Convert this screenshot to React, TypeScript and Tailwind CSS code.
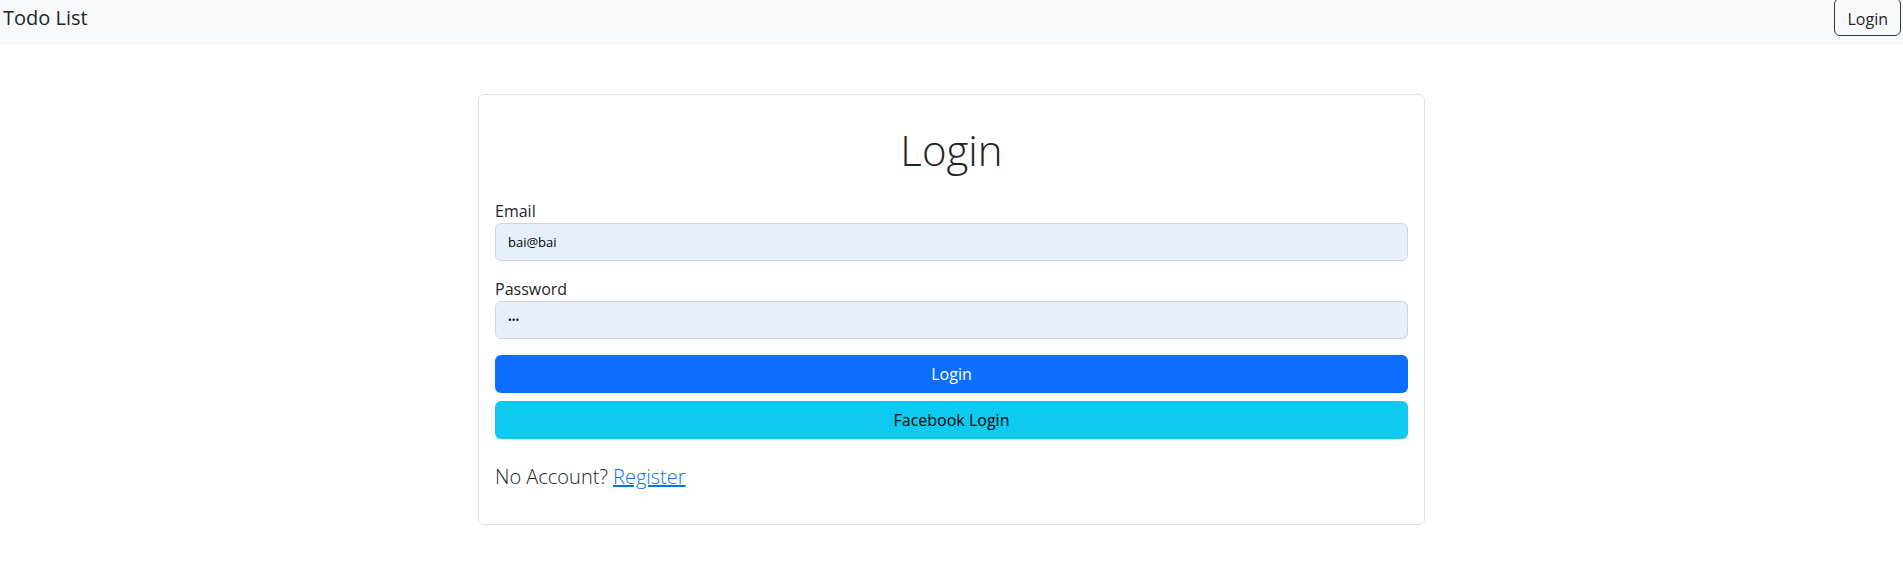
import { useState } from "react";

export default function App() {
  const [email, setEmail] = useState("bai@bai");
  const [password, setPassword] = useState("123");

  return (
    <div className="min-h-screen bg-white font-['Open_Sans',sans-serif] text-[#212529]">
      <nav className="flex h-[45px] items-start justify-between bg-[#f8f9fa]">
        <a href="#" className="pl-[3px] pt-[3px] text-[20px] leading-[30px] text-[#212529]">
          Todo List
        </a>
        <button className="-mt-[2px] mr-[2px] flex h-[38px] items-center rounded-[6px] border border-[#343a40] px-3 pt-[3px] text-[16px] leading-6 text-[#212529]">
          Login
        </button>
      </nav>

      <div className="mx-auto mt-[49px] w-[947px] rounded-[6px] border border-[#dee2e6] bg-white p-4">
        <h1 className="mt-[15px] mb-[25px] text-center text-[42px] leading-[48px] font-light">
          Login
        </h1>

        <form onSubmit={(e) => e.preventDefault()}>
          <div className="mb-4">
            <label className="block text-[16px] leading-6">Email</label>
            <input
              type="email"
              value={email}
              onChange={(e) => setEmail(e.target.value)}
              className="block h-[38px] w-full rounded-[6px] border border-[#ced4da] bg-[#e8f0fe] px-3 text-[13px] text-black outline-none"
            />
          </div>
          <div className="mb-4">
            <label className="block text-[16px] leading-6">Password</label>
            <input
              type="password"
              value={password}
              onChange={(e) => setPassword(e.target.value)}
              className="block h-[38px] w-full rounded-[6px] border border-[#ced4da] bg-[#e8f0fe] px-3 text-[10px] text-black outline-none"
            />
          </div>
          <button
            type="submit"
            className="block h-[38px] w-full rounded-[6px] bg-[#0d6efd] text-[16px] text-white"
          >
            Login
          </button>
          <button
            type="button"
            className="mt-2 block h-[38px] w-full rounded-[6px] bg-[#0dcaf0] text-[16px] text-black"
          >
            Facebook Login
          </button>
        </form>

        <p className="mt-[23px] mb-4 text-[20px] leading-[30px] font-light">
          No Account?{" "}
          <a href="#" className="text-[#0d6efd] underline">
            Register
          </a>
        </p>
      </div>
    </div>
  );
}
